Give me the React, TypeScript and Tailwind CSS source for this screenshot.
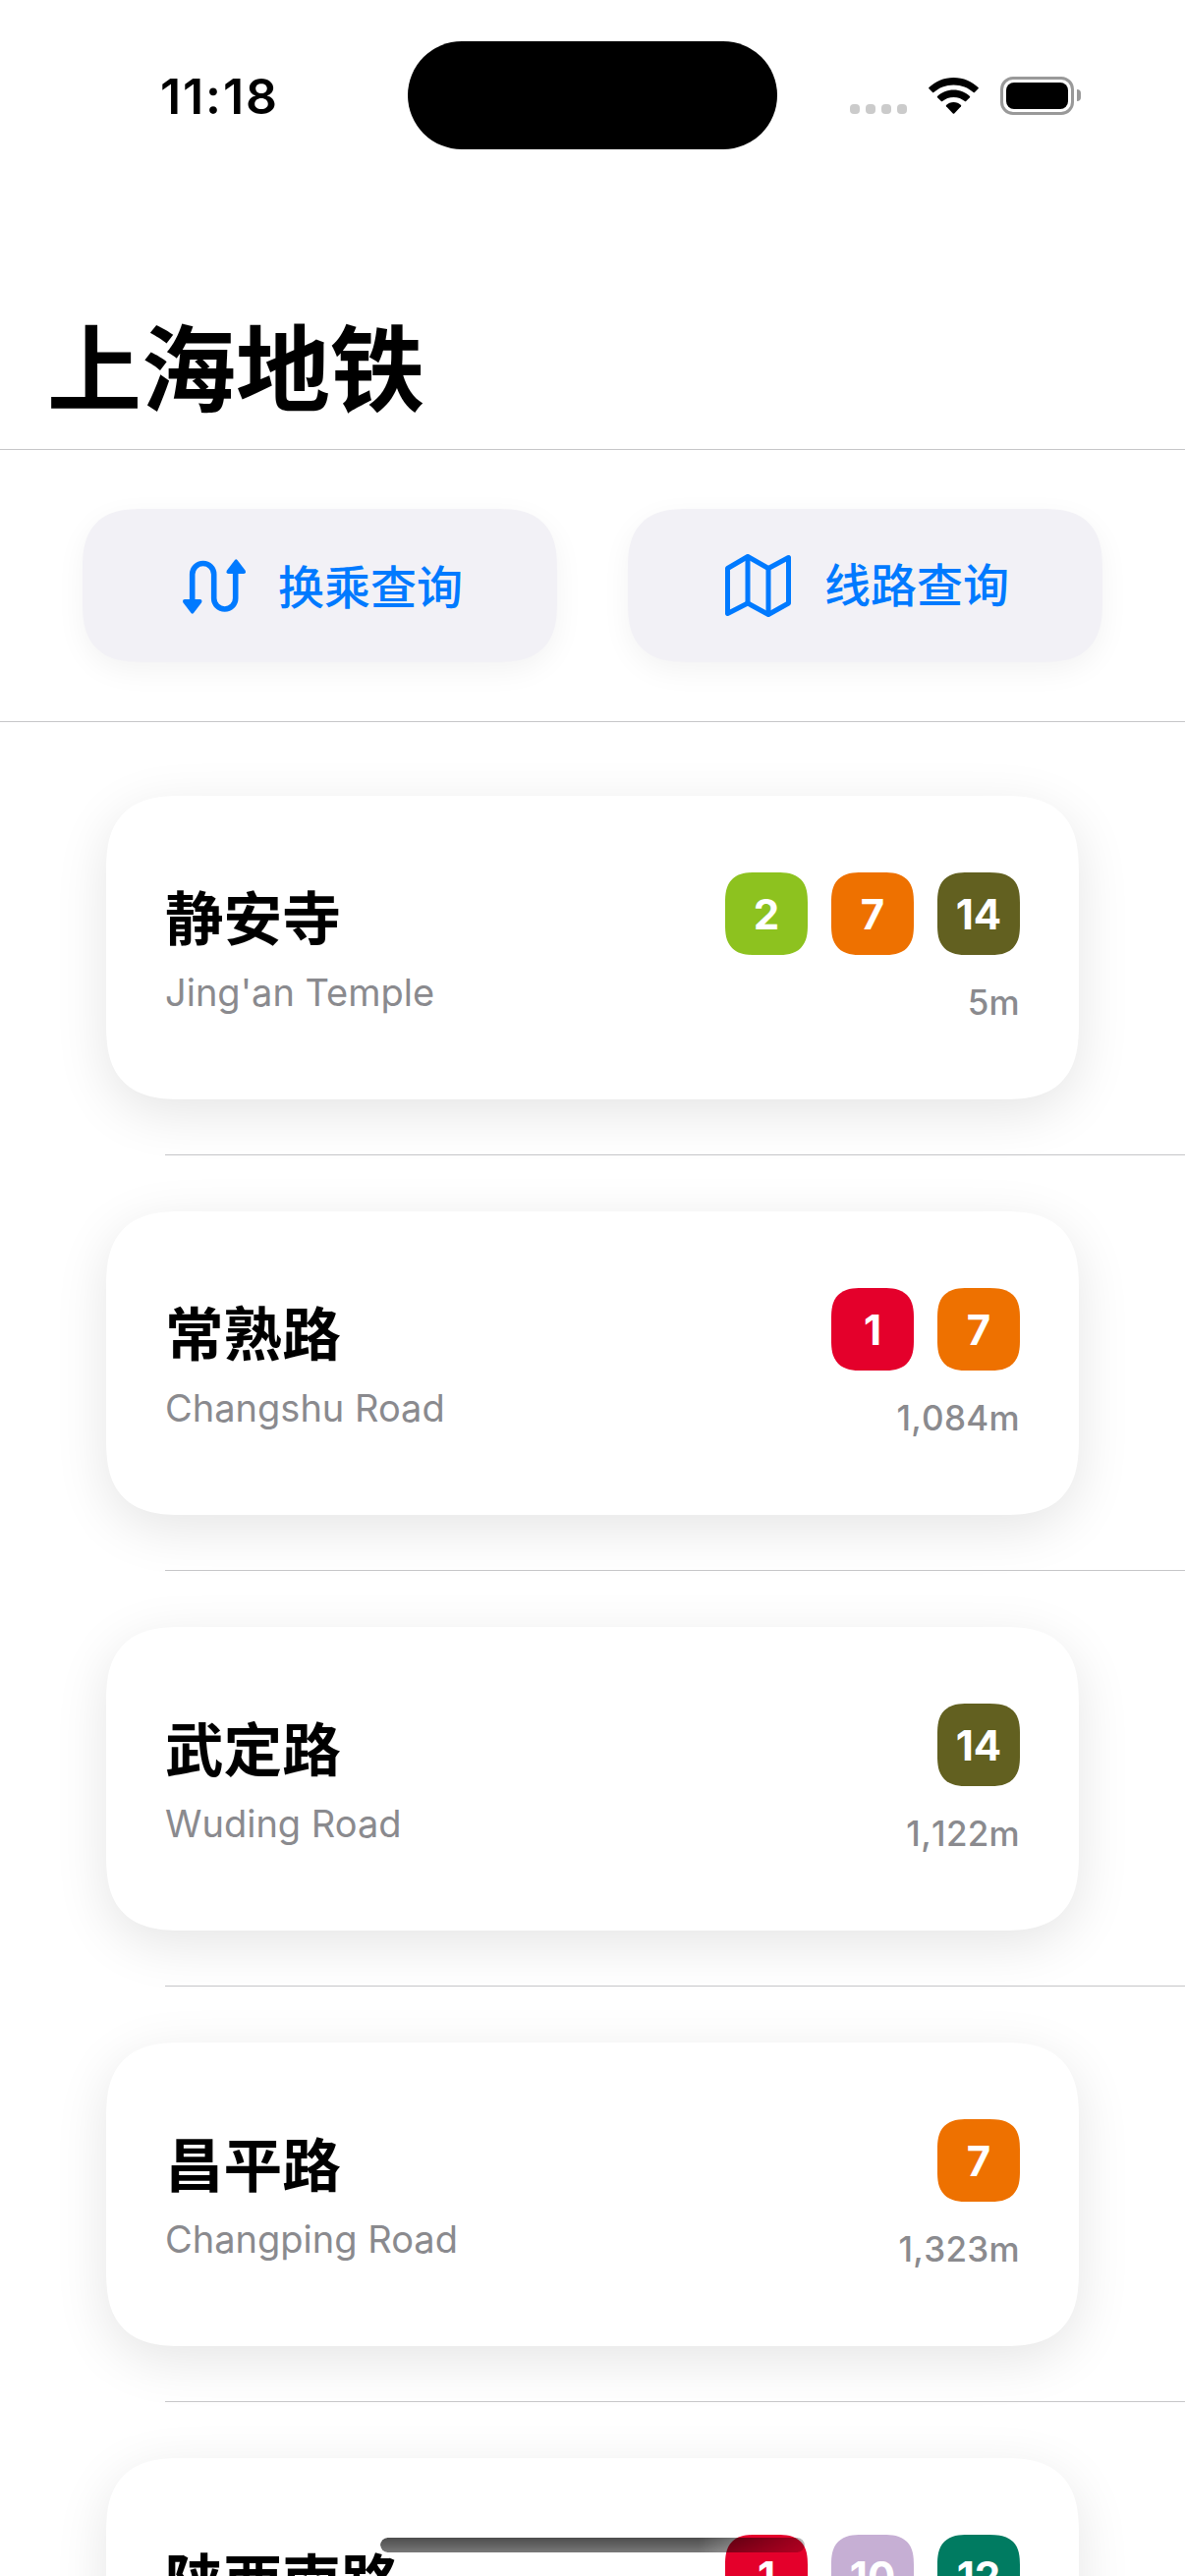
type Line = { n: string; c: string };
type Station = { zh: string; en: string; dist: string; lines: Line[] };

const L1 = { n: "1", c: "bg-[#e4002b]" };
const L2 = { n: "2", c: "bg-[#8dc21f]" };
const L7 = { n: "7", c: "bg-[#ee7100]" };
const L10 = { n: "10", c: "bg-[#c6afd4]" };
const L12 = { n: "12", c: "bg-[#007b61]" };
const L14 = { n: "14", c: "bg-[#626020]" };

const stations: Station[] = [
  { zh: "静安寺", en: "Jing'an Temple", dist: "5m", lines: [L2, L7, L14] },
  { zh: "常熟路", en: "Changshu Road", dist: "1,084m", lines: [L1, L7] },
  { zh: "武定路", en: "Wuding Road", dist: "1,122m", lines: [L14] },
  { zh: "昌平路", en: "Changping Road", dist: "1,323m", lines: [L7] },
  { zh: "陕西南路", en: "", dist: "", lines: [L1, L10, L12] },
];

function StatusBar() {
  return (
    <div className="flex h-[177px] shrink-0 items-start">
      <div className="w-[415px] pt-[68px] pl-[163px] text-[50px] leading-[60px] font-semibold tracking-[1.9px]">11:18</div>
      <div className="mt-[42px] h-[110px] w-[376px] rounded-[55px] bg-black" />
      <div className="mt-[78px] flex pl-[74px]">
        <div className="mt-[28px] flex gap-[6px]">
          {[0, 1, 2, 3].map((i) => (
            <div key={i} className="size-[10px] rounded-[4px] bg-[#cbcbcb]" />
          ))}
        </div>
        <svg className="mt-px ml-[22px] h-[38px] w-[51px]" viewBox="0 0 51 38">
          <path d="M25.5 0C35.5 0 44.3 3.900 50.600 10.100Q51.100 10.700 50.600 11.300L46.900 15Q46.300 15.500 45.700 15C40.500 10.200 33.500 7.400 25.500 7.400S10.500 10.200 5.300 15Q4.700 15.500 4.100 15L.400 11.300Q-.100 10.700.400 10.100C6.700 3.900 15.500 0 25.500 0Z" />
          <path d="M25.500 12.500C32 12.500 37.700 14.900 42 19Q42.500 19.600 42 20.200L38.100 24.100Q37.500 24.600 36.900 24.100C33.900 21.400 30 19.900 25.500 19.900S17.100 21.400 14.100 24.100Q13.500 24.600 12.900 24.100L9 20.200Q8.500 19.600 9 19C13.300 14.900 19 12.500 25.500 12.500Z" />
          <path d="M25.500 25C28.400 25 31 26.100 33 28Q33.500 28.600 33 29.200L26.200 36.500Q25.500 37.200 24.800 36.500L18 29.200Q17.500 28.600 18 28C20 26.100 22.600 25 25.500 25Z" />
        </svg>
        <div className="ml-[22px] h-[39px] w-[75px] rounded-[13px] border-3 border-[#999] p-[3px]">
          <div className="h-full rounded-[8px] bg-black" />
        </div>
        <div className="mt-[13px] ml-[3px] h-[12px] w-[4px] rounded-r-full bg-[#999]" />
      </div>
    </div>
  );
}

function RouteIcon() {
  return (
    <svg className="mt-[2px] h-[56px] w-[64px] shrink-0" viewBox="0 0 64 56" fill="none">
      <path d="M9.700 44V15.500a11 11 0 0 1 22 0V40a11 11 0 0 0 22 0V13" stroke="#007aff" strokeWidth="5.6" />
      <path d="M11 55L19 44.500Q20.500 41.500 17.500 41H2Q-1 41.500.500 44.500L8.500 55Q9.800 56.500 11 55Z" fill="#007aff" />
      <path d="M53 1L45 11.500Q43.500 14.500 46.500 15H62Q65 14.500 63.500 11.500L55.500 1Q54.200-.500 53 1Z" fill="#007aff" />
    </svg>
  );
}

function MapIcon() {
  return (
    <svg className="h-[64px] w-[67px] shrink-0" viewBox="0 0 67 64" fill="none" stroke="#007aff" strokeWidth="5" strokeLinejoin="round">
      <path d="M2.500 14.500L23 2.500L44 14.500L64.500 3.500V50L44 61.500L23 50L2.500 60.500Z" />
      <path d="M23 2.500V50M44 14V61" />
    </svg>
  );
}

function StationRow({ s }: { s: Station }) {
  return (
    <li className="shrink-0">
      <div className="px-[108px] pt-[57px] pb-[56px]">
        <div className="flex h-[309px] justify-between rounded-[66px] bg-white px-[60px] shadow-[0_14px_54px_rgba(0,0,0,0.105)] supports-[corner-shape:squircle]:rounded-[78px] supports-[corner-shape:squircle]:[corner-shape:superellipse(1.42)]">
          <div className="pt-[80px]">
            <h2 className="text-[59.6px] leading-[90px] font-bold whitespace-nowrap">{s.zh}</h2>
            <p className="mt-[7px] text-[38px] leading-[46px] whitespace-nowrap text-[#8a8a8e]">{s.en}</p>
          </div>
          <div className="flex flex-col items-end pt-[78px]">
            <div className="flex gap-6">
              {s.lines.map((l) => (
                <span key={l.n} className={`flex size-[84px] items-center justify-center rounded-[26px] text-[42px] font-bold text-white supports-[corner-shape:squircle]:rounded-[31px] supports-[corner-shape:squircle]:[corner-shape:superellipse(1.42)] ${l.c}`}>{l.n}</span>
              ))}
            </div>
            <p className="mt-[26px] text-[35px] leading-[44px] font-medium tracking-[0.3px] [font-kerning:none] text-[#8a8a8e]">{s.dist}</p>
          </div>
        </div>
      </div>
      <div className="ml-[168px] h-px bg-[#c6c6c8]" />
    </li>
  );
}

export default function App() {
  return (
    <div className="relative flex h-[2622px] w-[1206px] flex-col overflow-hidden bg-white font-[Inter,'Noto_Sans_CJK_SC',sans-serif] text-black">
      <StatusBar />
      <header className="flex h-[281px] shrink-0 items-end border-b border-[#c6c6c8] px-12 pb-[9px]">
        <h1 className="text-[96px] leading-[144px] font-bold">上海地铁</h1>
      </header>
      <nav className="flex h-[277px] shrink-0 gap-[72px] border-b border-[#c6c6c8] px-[84px] pt-[60px] text-[47px] font-medium text-[#007aff]">
        <button className="flex h-[156px] w-[483px] shrink-0 items-center rounded-[52px] bg-[#f2f1f6] pl-[102px] shadow-[0_9px_30px_rgba(0,0,0,0.05)] supports-[corner-shape:squircle]:rounded-[62px] supports-[corner-shape:squircle]:[corner-shape:superellipse(1.42)]">
          <RouteIcon />
          <span className="mt-[5px] ml-[33px]">换乘查询</span>
        </button>
        <button className="flex h-[156px] w-[483px] shrink-0 items-center rounded-[52px] bg-[#f2f1f6] pl-[99px] shadow-[0_9px_30px_rgba(0,0,0,0.05)] supports-[corner-shape:squircle]:rounded-[62px] supports-[corner-shape:squircle]:[corner-shape:superellipse(1.42)]">
          <MapIcon />
          <span className="ml-[34px]">线路查询</span>
        </button>
      </nav>
      <ul className="flex flex-col pt-[18px]">
        {stations.map((s) => (
          <StationRow key={s.zh} s={s} />
        ))}
      </ul>
      <div className="absolute top-[2583px] left-[387px] h-[15px] w-[432px] rounded-full bg-linear-to-b from-black/70 to-black/53 [mask-image:linear-gradient(to_right,black_75%,rgba(0,0,0,0.4))]" />
    </div>
  );
}
